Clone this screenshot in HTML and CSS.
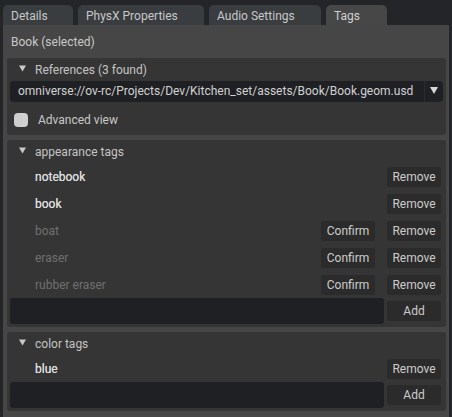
FILE: index.html
```html
<!DOCTYPE html>
<html lang="en">
<head>
  <meta charset="UTF-8">
  <title>Property Window - Tags</title>
  <link rel="stylesheet" href="styles.css">
</head>
<body>
  <div class="window">
    <nav class="tabs">
      <div class="tab tab-details">Details</div>
      <div class="tab tab-physx">PhysX Properties</div>
      <div class="tab tab-audio">Audio Settings</div>
      <div class="tab tab-tags active">Tags</div>
    </nav>

    <div class="panel">
      <div class="prim-title">Book (selected)</div>

      <!-- references collapsable frame -->
      <section class="frame refs">
        <div class="frame-head">
          <svg class="caret" viewBox="0 0 8 7"><path d="M0 0h8L4 7z" fill="#c8c8c8"/></svg>
          <span>References (3 found)</span>
        </div>
        <div class="combo">
          <span class="combo-value">omniverse://ov-rc/Projects/Dev/Kitchen_set/assets/Book/Book.geom.usd</span>
          <span class="combo-arrow">
            <svg viewBox="0 0 8 7"><path d="M0 0h8L4 7z" fill="#d6d6d6"/></svg>
          </span>
        </div>
        <div class="check-row">
          <span class="check"></span>
          <span>Advanced view</span>
        </div>
      </section>

      <section class="frame">
        <div class="frame-head">
          <svg class="caret" viewBox="0 0 8 7"><path d="M0 0h8L4 7z" fill="#c8c8c8"/></svg>
          <span>appearance tags</span>
        </div>
        <div class="tag-row">
          <span class="tag-name">notebook</span>
          <button class="btn">Remove</button>
        </div>
        <div class="tag-row">
          <span class="tag-name">book</span>
          <button class="btn">Remove</button>
        </div>
        <div class="tag-row pending">
          <span class="tag-name">boat</span>
          <button class="btn confirm">Confirm</button>
          <button class="btn">Remove</button>
        </div>
        <div class="tag-row pending">
          <span class="tag-name">eraser</span>
          <button class="btn confirm">Confirm</button>
          <button class="btn">Remove</button>
        </div>
        <div class="tag-row pending">
          <span class="tag-name">rubber eraser</span>
          <button class="btn confirm">Confirm</button>
          <button class="btn">Remove</button>
        </div>
        <div class="add-row">
          <input class="tag-input" type="text">
          <button class="btn">Add</button>
        </div>
      </section>

      <section class="frame">
        <div class="frame-head">
          <svg class="caret" viewBox="0 0 8 7"><path d="M0 0h8L4 7z" fill="#c8c8c8"/></svg>
          <span>color tags</span>
        </div>
        <div class="tag-row">
          <span class="tag-name">blue</span>
          <button class="btn">Remove</button>
        </div>
        <div class="add-row">
          <input class="tag-input" type="text">
          <button class="btn">Add</button>
        </div>
      </section>
    </div>
  </div>
</body>
</html>
```

FILE: styles.css
```css
* {
  margin: 0;
  padding: 0;
  box-sizing: border-box;
}

body {
  background-color: #232528;
  font-family: Roboto, "Liberation Sans", sans-serif;
  font-size: 12px;
  color: #c4c4c4;
  width: 452px;
  height: 417px;
  overflow: hidden;
}

.window {
  display: flex;
  flex-direction: column;
  height: 417px;
}

/* tab bar */
.tabs {
  display: flex;
  gap: 5px;
  padding: 5px 0 0 3px;
  height: 25px;
}

.tab {
  height: 20px;
  line-height: 22px;
  padding-left: 8px;
  border-radius: 5px 5px 0 0;
  background-color: #3a3d40;
  color: #c8c8c8;
}

.tab-details { width: 70px; }
.tab-physx { width: 126px; }
.tab-audio { width: 112px; }
.tab-tags { width: 61px; }

.tab.active {
  background-color: #474747;
  color: #d0d0d0;
}

/* main panel */
.panel {
  background-color: #464646;
  margin: 0 3px 3px 3px;
  padding: 0 3px 5px 4px;
  flex: 1;
}

.prim-title {
  height: 33px;
  line-height: 35px;
  padding-left: 4px;
  color: #c8c8c8;
}

.frame {
  background-color: #353535;
  border-radius: 3px;
  padding: 0 5px 3px 3px;
  margin-bottom: 5px;
}

.frame:last-child {
  margin-top: 1px;
}

.frame-head {
  display: flex;
  align-items: center;
  height: 23px;
  padding-left: 9px;
  color: #c4c4c4;
}

.caret {
  width: 7px;
  height: 7px;
  margin-right: 9px;
  margin-top: -3px;
}

/* references */
.refs {
  padding-right: 3px;
  padding-bottom: 2px;
}

.combo {
  display: flex;
  height: 21px;
  background-color: #1f2023;
  border-radius: 4px;
}

.combo-value {
  flex: 1;
  line-height: 21px;
  padding-left: 8px;
  color: #d2d2d2;
  white-space: nowrap;
  overflow: hidden;
}

.combo-arrow {
  width: 19px;
  border-left: 1px solid #2b2c2f;
  display: flex;
  align-items: center;
  justify-content: center;
}

.combo-arrow svg {
  width: 8px;
  height: 7px;
  margin-top: -2px;
}

.check-row {
  display: flex;
  align-items: center;
  height: 31px;
  padding: 4px 0 0 4px;
  color: #c8c8c8;
}

.check {
  width: 14px;
  height: 14px;
  border-radius: 4px;
  background-color: #cfcfcf;
  margin-right: 10px;
}

/* tag rows */
.tag-row {
  display: flex;
  align-items: center;
  height: 27px;
  padding-left: 25px;
}

.tag-name {
  flex: 1;
  color: #dcdcdc;
  text-shadow: 0 0 0.4px #dcdcdc;
}

.tag-row.pending .tag-name {
  color: #6f6f6f;
  text-shadow: none;
}

.btn {
  width: 54px;
  height: 20px;
  border: none;
  border-radius: 2px;
  background-color: #2b2b2b;
  color: #cccccc;
  font-family: inherit;
  font-size: 12px;
}

.btn.confirm {
  margin-right: 12px;
}

.add-row {
  display: flex;
  align-items: center;
  gap: 3px;
  height: 26px;
}

.tag-input {
  flex: 1;
  height: 26px;
  border: none;
  border-radius: 3px;
  background-color: #1f2023;
  outline: none;
}
```
